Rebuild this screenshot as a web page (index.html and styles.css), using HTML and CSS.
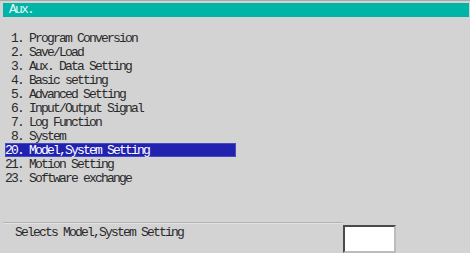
FILE: index.html
```html
<!DOCTYPE html>
<html lang="en">

<head>
    <meta charset="UTF-8">
    <meta name="viewport" content="width=device-width, initial-scale=1.0">
    <title>Aux.</title>
    <link rel="stylesheet" href="styles.css">
</head>

<body>
    <div class="screen">
        <div class="titleBar">Aux.</div>

        <ul class="menuList">
            <li> 1. Program Conversion</li>
            <li> 2. Save/Load</li>
            <li> 3. Aux. Data Setting</li>
            <li> 4. Basic setting</li>
            <li> 5. Advanced Setting</li>
            <li> 6. Input/Output Signal</li>
            <li> 7. Log Function</li>
            <li> 8. System</li>
            <li class="selected">20. Model,System Setting</li>
            <li>21. Motion Setting</li>
            <li>23. Software exchange</li>
        </ul>

        <div class="footer">
            <div class="message">Selects Model,System Setting</div>
            <div class="inputBox"></div>
        </div>
    </div>
</body>

</html>
```

FILE: styles.css
```css
* {
    margin: 0;
    padding: 0;
    box-sizing: border-box;
}

body {
    width: 470px;
    height: 253px;
    overflow: hidden;
    background-color: #d3d3d3;
    font-family: "Liberation Mono", monospace;
    font-size: 13px;
    letter-spacing: -1.8px;
    color: #2a2a2a;
}

.screen {
    display: flex;
    flex-direction: column;
    height: 253px;
    border-top: 1px solid #a9a9a9;
}

.titleBar {
    height: 14px;
    margin: 2px 1px 0 3px;
    padding-left: 6px;
    line-height: 14px;
    background-color: #00b4a7;
    color: #e6f6f4;
}

.menuList {
    list-style: none;
    margin-top: 14px;
    padding-left: 5px;
}

.menuList li {
    width: 231px;
    height: 14px;
    line-height: 15px;
    white-space: pre;
}

.menuList li.selected {
    background-color: #2222b0;
    color: #ffffff;
    box-shadow: inset 0 0 0 1px #4a4ac0;
}

.footer {
    display: flex;
    margin-top: auto;
    padding-left: 3px;
}

.message {
    width: 340px;
    height: 31px;
    padding: 2px 0 0 12px;
    line-height: 15px;
    border-top: 1px solid #b4b4b4;
    box-shadow: inset 0 1px 0 #e2e2e2;
}

.inputBox {
    width: 53px;
    height: 28px;
    margin-top: 3px;
    background-color: #ffffff;
    border-top: 2px solid #4a4a4a;
    border-left: 2px solid #4a4a4a;
    border-right: 2px solid #bcbcbc;
    border-bottom: 2px solid #bcbcbc;
}
```
